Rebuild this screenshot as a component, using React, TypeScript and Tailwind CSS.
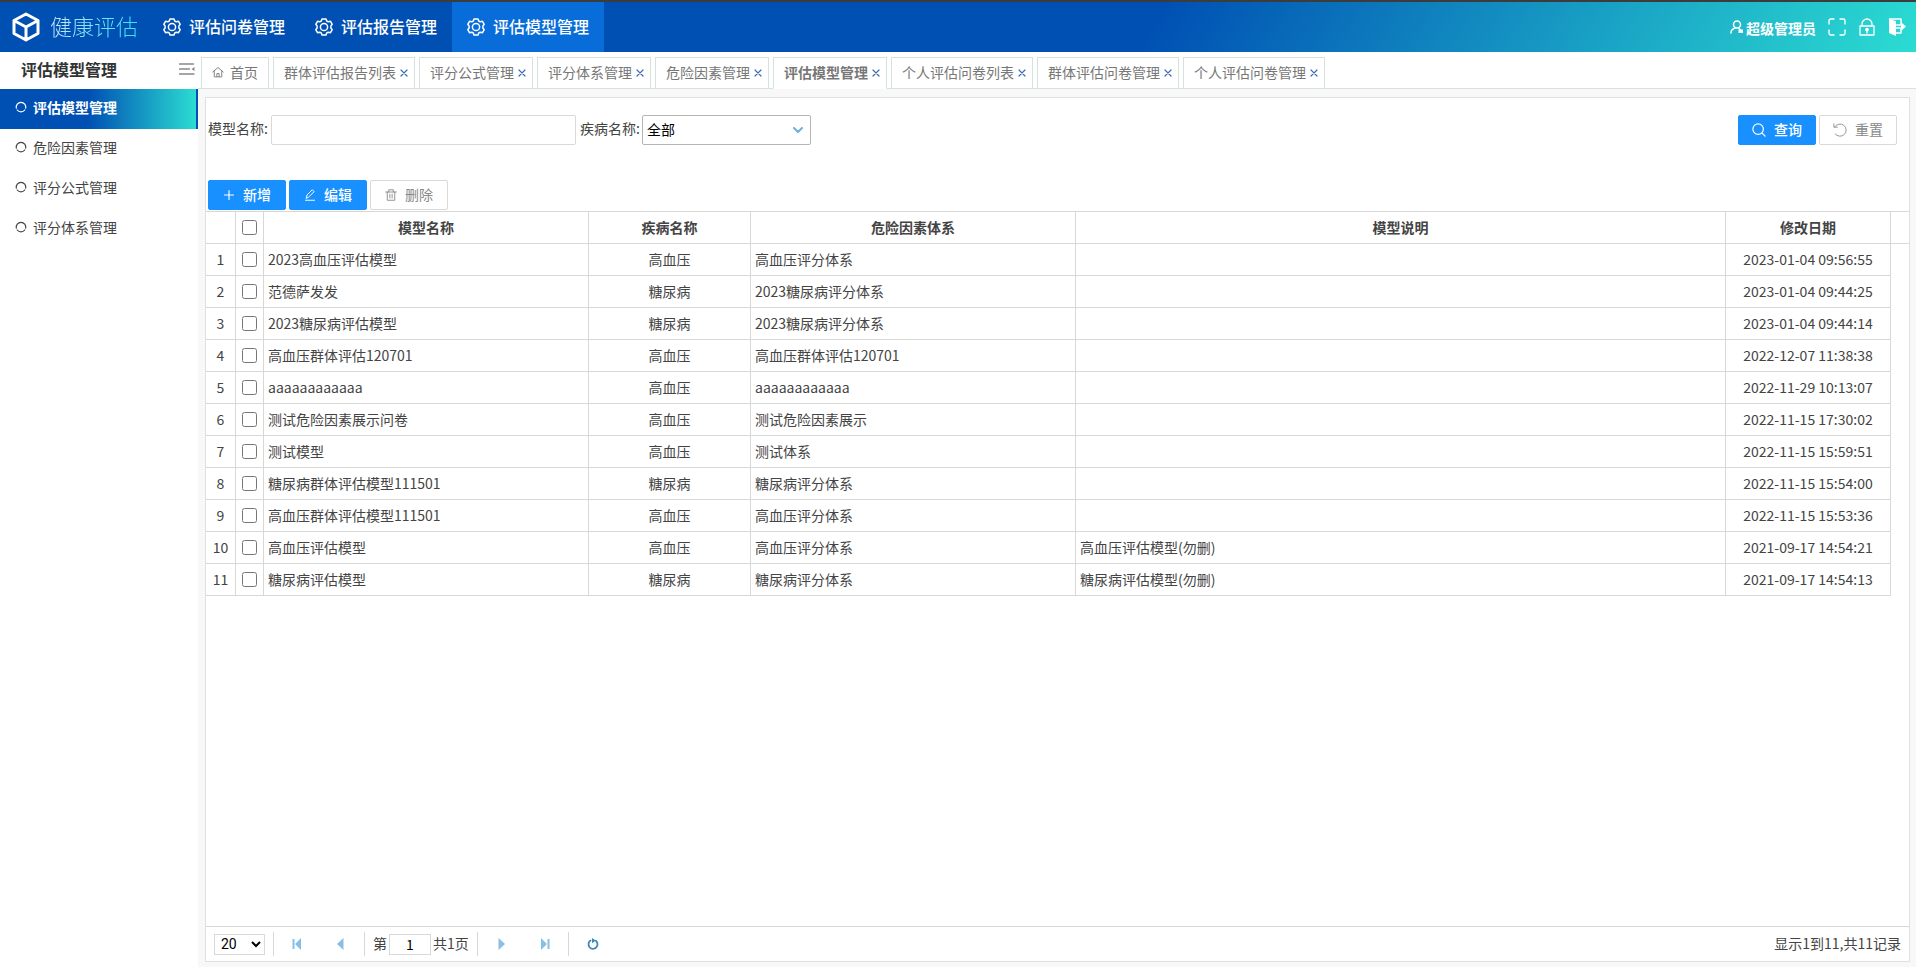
import type { ReactNode } from "react"

const menus = ["评估问卷管理", "评估报告管理", "评估模型管理"]
const sideItems = ["评估模型管理", "危险因素管理", "评分公式管理", "评分体系管理"]
const tabs = [
  "群体评估报告列表",
  "评分公式管理",
  "评分体系管理",
  "危险因素管理",
  "评估模型管理",
  "个人评估问卷列表",
  "群体评估问卷管理",
  "个人评估问卷管理",
]
const current = "评估模型管理"

const rows = [
  { name: "2023高血压评估模型", disease: "高血压", system: "高血压评分体系", note: "", date: "2023-01-04 09:56:55" },
  { name: "范德萨发发", disease: "糖尿病", system: "2023糖尿病评分体系", note: "", date: "2023-01-04 09:44:25" },
  { name: "2023糖尿病评估模型", disease: "糖尿病", system: "2023糖尿病评分体系", note: "", date: "2023-01-04 09:44:14" },
  { name: "高血压群体评估120701", disease: "高血压", system: "高血压群体评估120701", note: "", date: "2022-12-07 11:38:38" },
  { name: "aaaaaaaaaaaa", disease: "高血压", system: "aaaaaaaaaaaa", note: "", date: "2022-11-29 10:13:07" },
  { name: "测试危险因素展示问卷", disease: "高血压", system: "测试危险因素展示", note: "", date: "2022-11-15 17:30:02" },
  { name: "测试模型", disease: "高血压", system: "测试体系", note: "", date: "2022-11-15 15:59:51" },
  { name: "糖尿病群体评估模型111501", disease: "糖尿病", system: "糖尿病评分体系", note: "", date: "2022-11-15 15:54:00" },
  { name: "高血压群体评估模型111501", disease: "高血压", system: "高血压评分体系", note: "", date: "2022-11-15 15:53:36" },
  { name: "高血压评估模型", disease: "高血压", system: "高血压评分体系", note: "高血压评估模型(勿删)", date: "2021-09-17 14:54:21" },
  { name: "糖尿病评估模型", disease: "糖尿病", system: "糖尿病评分体系", note: "糖尿病评估模型(勿删)", date: "2021-09-17 14:54:13" },
]

interface IconProps {
  className?: string
  children: ReactNode
  box?: string
  width?: number
}

function Icon({ className = "size-4", children, box = "0 0 16 16", width = 1 }: IconProps) {
  return (
    <svg
      className={`shrink-0 ${className}`}
      viewBox={box}
      fill="none"
      stroke="currentColor"
      strokeWidth={width}
      strokeLinecap="round"
      strokeLinejoin="round"
      aria-hidden="true"
    >
      {children}
    </svg>
  )
}

function GearIcon() {
  return (
    <Icon className="size-[18px]" box="0 0 18 18" width={1.5}>
      <path d="M7 .9h4l.7 2.1 1.5.8 2.3-.5 1.7 3-1.3 1.7v2l1.3 1.7-1.7 3-2.3-.5-1.5.8-.7 2.1H7L6.3 15l-1.5-.8-2.3.5-1.7-3L2.1 10V8L.8 6.3l1.7-3 2.3.5L6.3 3z" />
      <circle cx="9" cy="9" r="3.6" />
    </Icon>
  )
}

function Header() {
  return (
    <header className="flex h-[52px] border-t-2 border-[#3c3c3c] bg-[linear-gradient(120deg,#0050b3_60%,#2bdcd2)] text-white">
      <div className="flex w-[148px] items-center gap-2.5 pl-3">
        <Icon className="h-[30px] w-7" box="0 0 28 30" width={3}>
          <path d="M14 2 26 8.5v13L14 28 2 21.5v-13zM2 8.5l12 6.5 12-6.5M14 15v13" />
        </Icon>
        <span className="bg-linear-to-r/srgb from-[#cfe6ff] to-[#2fe6f5] bg-clip-text pb-1 text-[22px] leading-8 font-light whitespace-nowrap text-transparent">
          健康评估
        </span>
      </div>
      <nav className="flex">
        {menus.map((m) => (
          <a
            key={m}
            href="#"
            className={`flex items-center gap-2 px-[15px] text-base font-medium whitespace-nowrap ${m === current ? "bg-[#096dd9]" : ""}`}
          >
            <GearIcon />
            <span className="pb-0.5">{m}</span>
          </a>
        ))}
      </nav>
      <div className="ml-auto flex items-center gap-3 pr-2.5">
        <a href="#" className="flex items-center gap-0.5 text-sm font-bold whitespace-nowrap">
          <Icon className="size-3.5" box="0 0 14 14" width={1.5}>
            <circle cx="7" cy="4.5" r="3.5" />
            <path d="M1 13c0-3 2-4.500 4.500-5M8.500 8l2 2" />
            <path d="M8.500 9.500h4.500V13H8.500z" fill="currentColor" stroke="none" />
          </Icon>
          <span className="pt-0.5">超级管理员</span>
        </a>
        <button type="button" aria-label="全屏">
          <Icon className="size-[18px]" box="0 0 18 18" width={1.3}>
            <path d="M1 6V3q0-2 2-2h3M12 1h3q2 0 2 2v3M17 12v3q0 2-2 2h-3M6 17H3q-2 0-2-2v-3" />
          </Icon>
        </button>
        <button type="button" aria-label="锁屏">
          <Icon className="size-[18px]" box="0 0 18 18" width={1.3}>
            <path d="M2 8h14v9H2zM4 8V6a5 5 0 0 1 10 0v2M9 12v3" />
            <circle cx="9" cy="11.5" r="1.2" fill="currentColor" />
          </Icon>
        </button>
        <button type="button" aria-label="退出">
          <Icon className="size-[18px]" box="0 0 18 18" width={1.5}>
            <path d="M1 1l7 2v15l-7-3z" fill="currentColor" stroke="none" />
            <path d="M1.500 1H13v4.500M13 11.500V15H8M8.500 7H14M8.500 10H14" />
            <path d="M13 4l5 4.500-5 4.500z" fill="currentColor" stroke="none" />
          </Icon>
        </button>
      </div>
    </header>
  )
}

function Sidebar() {
  return (
    <aside className="w-[198px] shrink-0 bg-white">
      <div className="flex h-[37px] items-center justify-between pr-[3px] pb-1 pl-[21px]">
        <h1 className="text-base font-bold text-[#333]">{current}</h1>
        <button type="button" aria-label="收起菜单" className="text-[#888]">
          <Icon className="h-3 w-4" box="0 0 16 12" width={1.3}>
            <path d="M.5 1H14.500M.5 6H10.500M.5 11H15" />
            <path d="M15.500 4v4L12.500 6z" fill="currentColor" stroke="none" />
          </Icon>
        </button>
      </div>
      <nav>
        {sideItems.map((s) => (
          <a
            key={s}
            href="#"
            className={`flex h-10 items-center gap-1.5 pb-1 pl-[15px] text-sm ${
              s === current
                ? "border-r-2 border-[#0050b3] bg-linear-to-r/srgb from-[#0050b3] from-45% to-[#2bdcd2] font-bold text-white"
                : "text-[#444]"
            }`}
          >
            <Icon className="size-3" box="0 0 12 12" width={1.2}>
              <path d="M1.300 7.200A4.800 4.800 0 1 1 10.700 7.200M2.200 9A4.800 4.800 0 0 0 9.800 9" />
            </Icon>
            {s}
          </a>
        ))}
      </nav>
    </aside>
  )
}

function TabBar() {
  return (
    <div className="flex h-[37px] items-end gap-1 border-b border-[#dcdfe0] bg-white pl-[3px]">
      <a
        href="#"
        className="-mb-px flex h-8 items-center gap-1.5 border border-[#d5e3df] border-b-[#dcdfe0] px-2.5 pb-0.5 text-sm whitespace-nowrap text-[#777]"
      >
        <Icon className="size-3" width={1.2}>
          <path d="M1 8 8 2l7 6M3 7v7.500h10V7M6.500 14v-4h3v4" />
        </Icon>
        首页
      </a>
      {tabs.map((t) => (
        <div
          key={t}
          className={`-mb-px flex h-8 items-center gap-1 border border-[#d5e3df] pr-1.5 pb-0.5 pl-2.5 text-sm ${
            t === current ? "border-b-white font-bold" : "border-b-[#dcdfe0]"
          }`}
        >
          <a href="#" className="whitespace-nowrap text-[#777]">{t}</a>
          <button type="button" aria-label={`关闭${t}`} className="pt-0.5 text-[#3d6cb5]">
            <Icon className="size-2" box="0 0 8 8" width={1.2}>
              <path d="M1 1l6 6M7 1 1 7" />
            </Icon>
          </button>
        </div>
      ))}
    </div>
  )
}

interface BtnProps {
  primary?: boolean
  icon: ReactNode
  children: ReactNode
}

function Btn({ primary, icon, children }: BtnProps) {
  return (
    <button
      type="button"
      className={`flex h-[30px] w-[78px] items-center justify-center gap-2 rounded-xs border text-sm whitespace-nowrap ${
        primary ? "border-[#1890ff] bg-[#1890ff] font-medium text-white" : "border-[#d9d9d9] bg-white text-[#888]"
      }`}
    >
      {icon}
      <span className="pb-0.5">{children}</span>
    </button>
  )
}

function SearchForm() {
  return (
    <form className="flex h-16 items-center px-0.5" onSubmit={(e) => e.preventDefault()}>
      <label htmlFor="model-name" className="w-[63px] pb-1 whitespace-nowrap">模型名称:</label>
      <input id="model-name" type="text" className="h-[30px] w-[305px] rounded-xs border border-[#d9d9d9] px-1" />
      <label htmlFor="disease" className="ml-1 w-[62px] pb-1 whitespace-nowrap">疾病名称:</label>
      <div className="grid items-center">
        <select
          id="disease"
          className="col-start-1 row-start-1 h-[30px] w-[169px] appearance-none rounded-xs border border-[#b5b5b5] pb-0.5 pl-1 text-black"
        >
          <option>全部</option>
        </select>
        <Icon className="pointer-events-none col-start-1 row-start-1 mr-2 h-2 w-2.5 justify-self-end text-[#6cb0e0]" box="0 0 10 8" width={2}>
          <path d="m1 2 4 4 4-4" />
        </Icon>
      </div>
      <div className="ml-auto flex gap-[3px] pr-2.5">
        <Btn
          primary
          icon={
            <Icon className="size-3.5" width={1.4}>
              <circle cx="7" cy="7" r="6" />
              <path d="m11.500 11.500 3.500 3.500" />
            </Icon>
          }
        >
          查询
        </Btn>
        <Btn
          icon={
            <Icon className="size-3.5">
              <path d="M2 4.500A7 7 0 1 1 2.500 12.500M1 1v3.800h4" />
            </Icon>
          }
        >
          重置
        </Btn>
      </div>
    </form>
  )
}

function Toolbar() {
  return (
    <div className="flex gap-[3px] px-0.5 pt-[18px] pb-px">
      <Btn primary icon={<Icon className="size-3" width={1.5}><path d="M8 2v12M2 8h12" /></Icon>}>新增</Btn>
      <Btn primary icon={<Icon className="size-3" width={1.3}><path d="M2 15h12M3 12l1-4 7-7 2.500 2.500-7 7z" /></Icon>}>
        编辑
      </Btn>
      <Btn icon={<Icon className="size-3" width={1.2}><path d="M1 4h14M5 4V1h6v3M3 4v11h10V4M6.500 7v5M9.500 7v5" /></Icon>}>
        删除
      </Btn>
    </div>
  )
}

function ModelTable() {
  const box = "border-r border-b border-[#d8d8d8]"
  const cell = `${box} px-1 pb-0.5`
  return (
    <table className="w-full table-fixed border-separate border-spacing-0 border-t border-[#d8d8d8]">
      <colgroup>
        <col className="w-[30px]" />
        <col className="w-7" />
        <col className="w-[325px]" />
        <col className="w-[162px]" />
        <col className="w-[325px]" />
        <col />
        <col className="w-[165px]" />
        <col className="w-[18px]" />
      </colgroup>
      <thead>
        <tr className="h-8">
          <th className={box} />
          <th className={box}>
            <input type="checkbox" aria-label="全选" className="mx-auto block size-[15px]" />
          </th>
          <th className={cell}>模型名称</th>
          <th className={cell}>疾病名称</th>
          <th className={cell}>危险因素体系</th>
          <th className={cell}>模型说明</th>
          <th className={cell}>修改日期</th>
          <th className="border-b border-[#d8d8d8]" />
        </tr>
      </thead>
      <tbody>
        {rows.map((r, i) => (
          <tr key={i} className="h-8">
            <td className={`${box} pb-0.5 text-center`}>{i + 1}</td>
            <td className={box}>
              <input type="checkbox" aria-label={`选择${r.name}`} className="mx-auto block size-[15px]" />
            </td>
            <td className={cell}>{r.name}</td>
            <td className={`${cell} text-center`}>{r.disease}</td>
            <td className={cell}>{r.system}</td>
            <td className={cell}>{r.note}</td>
            <td className={`${cell} text-center whitespace-nowrap`}>{r.date}</td>
            <td />
          </tr>
        ))}
      </tbody>
    </table>
  )
}

function PageButton({ label, children }: { label: string; children: ReactNode }) {
  return (
    <button type="button" aria-label={label} className="flex h-6 w-11 items-center justify-center text-[#86bfe8]">
      <svg className="size-3" viewBox="0 0 12 12" fill="currentColor" aria-hidden="true">
        {children}
      </svg>
    </button>
  )
}

function Pager() {
  return (
    <div className="mt-auto flex h-[35px] items-center border-t border-[#d8d8d8] px-2">
      <select
        aria-label="每页条数"
        className="h-[21px] w-[51px] border border-[#d9d9d9] pl-0.5 font-[Roboto,sans-serif] text-sm text-black"
      >
        <option>20</option>
      </select>
      <div className="ml-2 flex items-center border-l border-[#d8d8d8]">
        <PageButton label="首页"><path d="M2.500 1h2v10h-2zM11 0v12L5 6z" /></PageButton>
        <PageButton label="上一页"><path d="M9.500 0v12L3 6z" /></PageButton>
      </div>
      <div className="ml-0.5 flex h-6 items-center border-x border-[#d8d8d8] px-2">
        <label htmlFor="page" className="pb-0.5">第</label>
        <input
          id="page"
          type="text"
          defaultValue="1"
          className="mx-0.5 h-[21px] w-[42px] border border-[#d9d9d9] text-center text-black"
        />
        <span className="pb-0.5 whitespace-nowrap">共1页</span>
      </div>
      <div className="ml-0.5 flex items-center">
        <PageButton label="下一页"><path d="M2.500 0v12L9 6z" /></PageButton>
        <PageButton label="末页"><path d="M7.500 1h2v10h-2zM1 0v12l6-6z" /></PageButton>
      </div>
      <button type="button" aria-label="刷新" className="flex h-6 items-center border-l border-[#d8d8d8] pl-[18px] text-[#4088b8]">
        <Icon className="size-3" box="0 0 12 12" width={1.8}>
          <path d="M3.500 2.600A4.500 4.500 0 1 0 8.800 2.800" />
          <path d="M5 0v5.200L8.800 2.500z" fill="currentColor" stroke="none" />
        </Icon>
      </button>
      <span className="ml-auto pb-0.5 whitespace-nowrap">显示1到11,共11记录</span>
    </div>
  )
}

export default function App() {
  return (
    <div className="flex min-h-screen flex-col bg-white font-['Noto_Sans_CJK_SC',sans-serif] text-sm text-[#444]">
      <Header />
      <div className="flex grow">
        <Sidebar />
        <main className="flex min-w-0 grow flex-col bg-[#f8f8f8]">
          <TabBar />
          <section className="mt-2 mr-1.5 mb-[5px] ml-[7px] flex grow flex-col border border-[#e0e0e0] bg-white">
            <SearchForm />
            <Toolbar />
            <ModelTable />
            <Pager />
          </section>
        </main>
      </div>
    </div>
  )
}
